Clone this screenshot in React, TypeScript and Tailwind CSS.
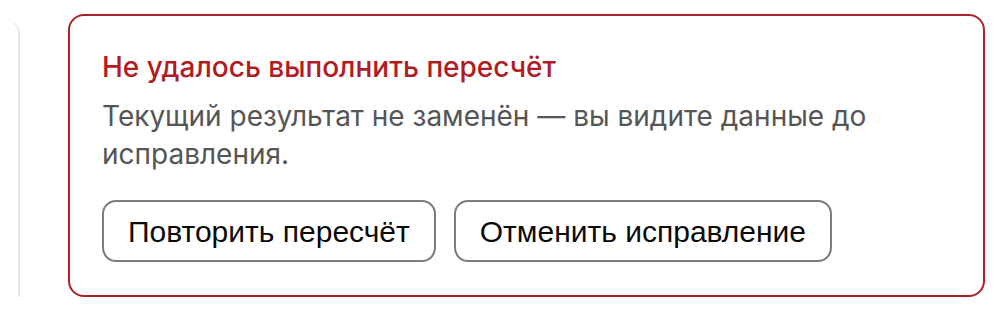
export default function App() {
  return (
    <div className="flex h-[310px] w-[1005px] bg-white pt-[14px]">
      <div className="mt-[6px] mb-[13px] w-[20px] rounded-tr-[14px] border-r-2 border-[#e6e6e6]" />
      <div className="ml-[48px] mb-[13px] w-[917px] rounded-[16px] border-2 border-[#ad2228] px-[32px] pt-[33px] pb-[33px] font-['Inter',sans-serif]">
        <div className="text-[28px] leading-[36px] font-medium text-[#b01c22]">Не удалось выполнить пересчёт</div>
        <p className="mt-[12px] text-[28px] leading-[38px] text-[#555555]">
          Текущий результат не заменён — вы видите данные до исправления.
        </p>
        <div className="mt-[27px] flex gap-[18px] font-['Liberation_Sans',Arial,sans-serif]">
          <button className="h-[62px] rounded-[14px] border-2 border-[#7c7c7c] bg-white px-[24px] text-[30px] text-[#0a0a0a]">
            Повторить пересчёт
          </button>
          <button className="h-[62px] rounded-[14px] border-2 border-[#7c7c7c] bg-white px-[24px] text-[30px] text-[#0a0a0a]">
            Отменить исправление
          </button>
        </div>
      </div>
    </div>
  );
}
